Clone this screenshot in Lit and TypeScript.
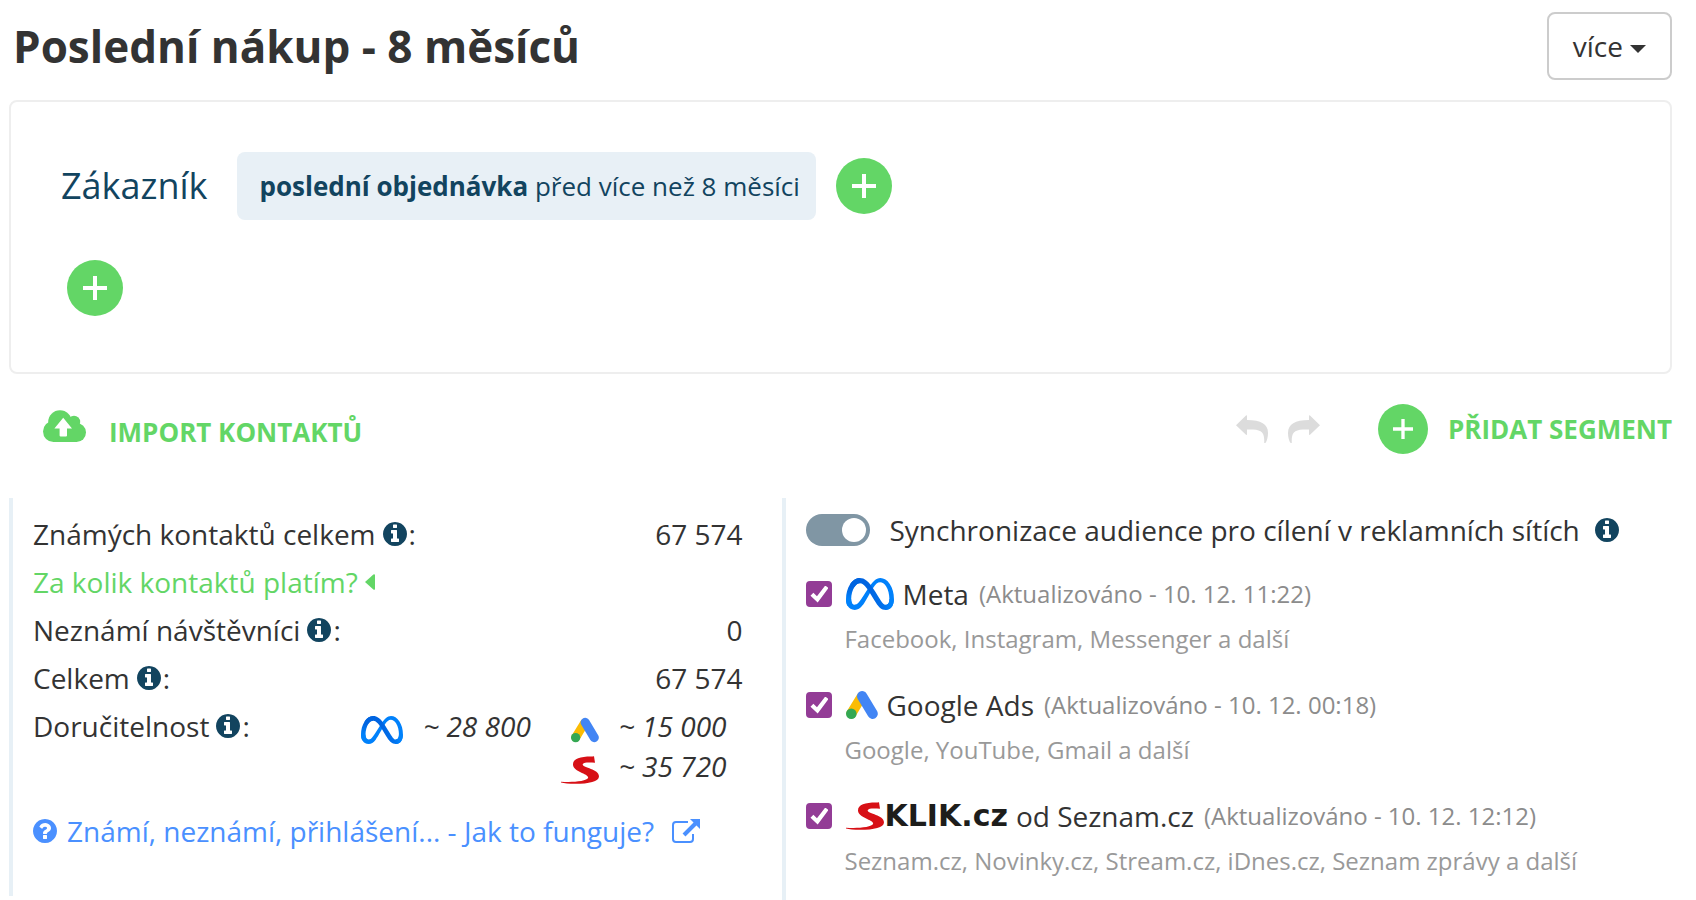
import { LitElement, html, css, svg } from "lit";
import { customElement, property, state } from "lit/decorators.js";

const circlePath =
  "M1536 768q0 209-103 385.5t-279.5 279.5-385.5 103-385.5-103-279.5-279.5-103-385.5 103-385.5 279.5-279.5 385.5-103 385.5 103 279.5 279.5 103 385.5z";

const infoIcon = html`<svg class="round-icon" viewBox="0 0 1536 1536" role="img" aria-label="Info">
  <path fill="currentColor" fill-rule="evenodd" d="M1024 1248v-160q0-14-9-23t-23-9h-96v-512q0-14-9-23t-23-9h-320q-14 0-23 9t-9 23v160q0 14 9 23t23 9h96v320h-96q-14 0-23 9t-9 23v160q0 14 9 23t23 9h448q14 0 23-9t9-23zm-128-896v-160q0-14-9-23t-23-9h-192q-14 0-23 9t-9 23v160q0 14 9 23t23 9h192q14 0 23-9t9-23z${circlePath}" />
</svg>`;

const questionIcon = html`<svg class="round-icon" viewBox="0 0 1536 1536" aria-hidden="true">
  <path fill="currentColor" fill-rule="evenodd" d="M896 1248v-192q0-14-9-23t-23-9h-192q-14 0-23 9t-9 23v192q0 14 9 23t23 9h192q14 0 23-9t9-23zm256-672q0-88-55.5-163t-138.5-116-170-41q-243 0-371 213-15 24 8 42l132 100q7 6 19 6 16 0 25-12 53-68 86-92 34-24 86-24 48 0 85.5 26t37.5 59q0 38-20 61t-68 45q-63 28-115.5 86.5t-52.5 125.5v36q0 14 9 23t23 9h192q14 0 23-9t9-23q0-19 21.5-49.5t54.5-49.5q32-18 49-28.5t46-35 44.5-48 28-60.5 12.5-81z${circlePath}" />
</svg>`;

const externalIcon = html`<svg width="28" height="24" viewBox="0 0 28 24" aria-hidden="true" fill="none" stroke="currentColor">
  <path stroke-width="2" d="M16 3H4Q1 3 1 6V20Q1 23 4 23H18Q21 23 21 20V15" />
  <path stroke-width="4" d="M12 16L24 4" />
  <path fill="currentColor" stroke="none" d="M18 0H28V10Z" />
</svg>`;

const cloudIcon = html`<svg width="43" height="32" viewBox="0 0 43 32" aria-hidden="true">
  <g fill="currentColor">
    <circle cx="17" cy="12" r="11.8" />
    <circle cx="31" cy="12" r="6.2" />
    <circle cx="10.5" cy="21.5" r="10.5" />
    <circle cx="33.5" cy="22.5" r="9.5" />
    <rect x="10" y="12" width="24" height="20" />
  </g>
  <path fill="#fff" d="M20.2 7.8L29 18.5H24V25.5Q24 26.5 23 26.5H17.6Q16.6 26.5 16.6 25.5V18.5H11.4Z" />
</svg>`;

const arrowPath = svg`<path fill="currentColor" d="M0 10.2L10 .4Q11 -.3 11 1V5C25 5 32 9 32 18C32 22 31 26 29.4 28H28.2C28.6 19 27 14.8 17 14.4H11V19Q11 20.6 10 19.8Z" />`;

const undoIcon = html`<svg width="32" height="28" viewBox="0 0 32 28" aria-hidden="true">${arrowPath}</svg>`;
const redoIcon = html`<svg width="32" height="28" viewBox="0 0 32 28" aria-hidden="true">
  <g transform="translate(32 0) scale(-1 1)">${arrowPath}</g>
</svg>`;

const plusIcon = (size: number) => html`<svg width=${size} height=${size} viewBox="0 0 24 24" aria-hidden="true">
  <path stroke="#fff" stroke-width="4" d="M12 0V24M0 12H24" />
</svg>`;

const metaLogo = (width: number, height: number) => html`<svg class="logo" width=${width} height=${height} viewBox="0 0 288 191" role="img" aria-label="Meta">
  <defs>
    <linearGradient id="meta-a" gradientUnits="userSpaceOnUse" x1="62" y1="101" x2="260" y2="91">
      <stop offset="0" stop-color="#0064e1" /><stop offset=".4" stop-color="#0064e1" />
      <stop offset=".83" stop-color="#0073ee" /><stop offset="1" stop-color="#0082fb" />
    </linearGradient>
    <linearGradient id="meta-b" gradientUnits="userSpaceOnUse" x1="41" y1="53" x2="41" y2="126">
      <stop offset="0" stop-color="#0064e0" /><stop offset="1" stop-color="#0082fb" />
    </linearGradient>
  </defs>
  <path fill="#0081fb" d="M31.06,126c0,11,2.41,19.41,5.56,24.51A19,19,0,0,0,53.19,160c8.1,0,15.51-2,29.79-21.76,11.44-15.83,24.92-38,34-52l15.36-23.6c10.67-16.39,23-34.61,37.18-47C181.07,5.6,193.54,0,206.09,0c21.07,0,41.14,12.21,56.5,35.11,16.81,25.08,25,56.67,25,89.27,0,19.38-3.82,33.62-10.32,44.87C271,180.13,258.72,191,238.13,191V160c17.63,0,22-16.2,22-34.74,0-26.42-6.16-55.74-19.73-76.69-9.63-14.86-22.11-23.94-35.84-23.94-14.85,0-26.8,11.2-40.23,31.17-7.14,10.61-14.47,23.54-22.7,38.13l-9.06,16c-18.2,32.27-22.81,39.62-31.91,51.75C84.74,183,71.12,191,53.19,191c-21.27,0-34.72-9.21-43-23.09C3.34,156.6,0,141.76,0,124.85Z" />
  <path fill="url(#meta-a)" d="M24.49,37.3C38.73,15.35,59.28,0,82.85,0c13.65,0,27.22,4,41.39,15.61,15.5,12.65,32,33.48,52.63,67.81l7.39,12.32c17.84,29.72,28,45,33.93,52.22,7.64,9.26,13,12,19.94,12,17.63,0,22-16.2,22-34.74l27.4-.86c0,19.38-3.82,33.62-10.32,44.87C271,180.13,258.72,191,238.13,191c-12.8,0-24.14-2.78-36.68-14.61-9.64-9.08-20.91-25.21-29.58-39.71L146.08,93.6c-12.94-21.62-24.81-37.74-31.68-45C107,40.71,97.51,31.23,82.35,31.23c-12.27,0-22.69,8.61-31.41,21.78Z" />
  <path fill="url(#meta-b)" d="M82.35,31.23c-12.27,0-22.69,8.61-31.41,21.78C38.61,71.62,31.06,99.34,31.06,126c0,11,2.41,19.41,5.56,24.51L10.14,167.91C3.34,156.6,0,141.76,0,124.85,0,94.1,8.44,62.05,24.49,37.3,38.73,15.35,59.28,0,82.85,0Z" />
</svg>`;

const adsLogo = (width: number, height: number) => html`<svg class="logo" width=${width} height=${height} viewBox="0 0 32 28" role="img" aria-label="Google Ads" stroke-linecap="round">
  <path stroke="#fbbc04" stroke-width="10" d="M15.4 6L5.4 22.4" />
  <path stroke="#4285f4" stroke-width="10.4" d="M16.2 5.3L26.6 22.7" />
  <circle fill="#34a853" cx="5.3" cy="22.7" r="5.3" />
</svg>`;

const seznamLogo = html`<svg class="logo" width="38" height="28" viewBox="0 0 38 28" role="img" aria-label="Seznam">
  <path fill="#d71016" d="M33 .2L34 6.8C29 6.600 22.400 6 21.600 8.400C22 11.600 38 13 38 20.200C38 25.600 28 27.800 14 27.800C8 27.800 3 27.200 0 26.500V25.700C9 26.400 26 26 27.200 21.600C27.600 17.600 12 15.600 12 8.400C12 2.400 20 .4 31.400 .6Z" />
</svg>`;

type Network = { id: string; logo: unknown; name: string; wordmark?: string; updated: string; reach: string };

const networks: Network[] = [
  { id: "meta", logo: metaLogo(48, 32), name: "Meta", updated: "(Aktualizováno - 10. 12. 11:22)", reach: "Facebook, Instagram, Messenger a další" },
  { id: "google", logo: adsLogo(32, 28), name: "Google Ads", updated: "(Aktualizováno - 10. 12. 00:18)", reach: "Google, YouTube, Gmail a další" },
  { id: "sklik", logo: seznamLogo, wordmark: "KLIK.cz", name: "od Seznam.cz", updated: "(Aktualizováno - 10. 12. 12:12)", reach: "Seznam.cz, Novinky.cz, Stream.cz, iDnes.cz, Seznam zprávy a další" },
];

const shared = css`
  * { box-sizing: border-box; }
  svg { display: block; flex: none; }
  .round-icon { width: 24px; height: 24px; }
  .info { color: #12445f; }
  button { font: inherit; color: inherit; background: none; border: 0; padding: 0; cursor: pointer; }
  a { text-decoration: none; }
`;

@customElement("segment-builder")
class SegmentBuilder extends LitElement {
  static styles = [
    shared,
    css`
      :host { display: block; }
      .panel {
        display: flex;
        flex-direction: column;
        align-items: flex-start;
        gap: 40px;
        padding: 50px 50px 56px;
        border: 2px solid #eee;
        border-radius: 8px;
      }
      .rule { display: flex; align-items: center; color: #12445f; }
      .subject { margin-right: 30px; font-size: 36px; line-height: 48px; }
      .chip {
        margin-right: 20px;
        padding: 16px 16px 16px 22px;
        border-radius: 8px;
        background: #e8f0f6;
        font-size: 26px;
        line-height: 36px;
      }
      .add {
        display: grid;
        place-items: center;
        width: 56px;
        height: 56px;
        border-radius: 50%;
        background: #63d666;
      }
      .add-group { margin-left: 6px; }
    `,
  ];

  render() {
    return html`
      <section class="panel">
        <div class="rule">
          <span class="subject">Zákazník</span>
          <button class="chip"><b>poslední objednávka</b> před více než 8 měsíci</button>
          <button class="add" aria-label="Přidat podmínku">${plusIcon(24)}</button>
        </div>
        <button class="add add-group" aria-label="Přidat skupinu">${plusIcon(24)}</button>
      </section>
    `;
  }
}

@customElement("contact-summary")
class ContactSummary extends LitElement {
  static styles = [
    shared,
    css`
      :host { display: block; padding: 12px 40px 41px 20px; border-left: 4px solid #e7f0f6; }
      .rows { margin: 0; }
      .row { display: flex; align-items: flex-start; justify-content: space-between; line-height: 48px; }
      .term { display: flex; align-items: center; }
      .term .info { margin: 0 2px 0 7px; }
      .value { margin: 0; }
      .price { display: inline-flex; align-items: center; gap: 7px; color: #63d666; }
      .reach {
        display: grid;
        grid-template-columns: 42px auto 38px auto;
        column-gap: 20px;
        justify-items: end;
        align-items: center;
        margin: 0;
        padding: 4px 16px 0 0;
        font-style: italic;
        line-height: 40px;
      }
      .logo { margin-top: 8px; }
      .first { margin-right: 10px; }
      .second-row { grid-column: 3; }
      .help { display: flex; align-items: center; margin-top: 21px; color: #4a90ff; line-height: 48px; }
      .help span { margin: 0 18px 0 10px; }
    `,
  ];

  private row(label: string, value: string) {
    return html`<div class="row">
      <dt class="term">${label}<span class="info">${infoIcon}</span>:</dt>
      <dd class="value">${value}</dd>
    </div>`;
  }

  render() {
    return html`
      <dl class="rows">
        ${this.row("Známých kontaktů celkem", "67 574")}
        <div class="row">
          <dt><a class="price" href="#">Za kolik kontaktů platím?
            <svg width="10" height="16" viewBox="0 0 10 16" aria-hidden="true"><path fill="currentColor" d="M10 1V15Q9.6 16.4 8.4 15.5L0 8L8.4 .5Q9.6 -.4 10 1Z" /></svg></a></dt>
        </div>
        ${this.row("Neznámí návštěvníci", "0")}
        ${this.row("Celkem", "67 574")}
        <div class="row">
          <dt class="term">Doručitelnost<span class="info">${infoIcon}</span>:</dt>
          <dd class="reach">
            ${metaLogo(42, 28)}<span class="first">~ 28 800</span>
            ${adsLogo(28, 26)}<span>~ 15 000</span>
            <div class="second-row">${seznamLogo}</div><span>~ 35 720</span>
          </dd>
        </div>
      </dl>
      <a class="help" href="#">${questionIcon}<span>Známí, neznámí, přihlášení... - Jak to funguje?</span>${externalIcon}</a>
    `;
  }
}

@customElement("ad-sync")
class AdSync extends LitElement {
  static styles = [
    shared,
    css`
      :host { display: block; padding: 8px 0 22px 20px; border-left: 4px solid #e7f0f6; }
      input { appearance: none; display: grid; flex: none; margin: 0; cursor: pointer; }
      .sync { display: flex; align-items: center; margin-bottom: 20px; line-height: 48px; }
      .sync label { margin: 0 15px 0 19px; }
      .switch {
        align-items: center;
        justify-items: start;
        width: 64px;
        height: 32px;
        padding: 0 4px;
        border-radius: 16px;
        background: #8096a4;
      }
      .switch::before { content: ""; width: 24px; height: 24px; border-radius: 50%; background: #fff; }
      .switch:checked { justify-items: end; }
      .networks { display: grid; gap: 29px; margin: 0; padding: 0; list-style: none; }
      .head { display: flex; align-items: center; line-height: 40px; }
      .tick {
        place-items: center;
        width: 26px;
        height: 26px;
        margin-right: 14px;
        border: 2px solid #933c96;
        border-radius: 4px;
      }
      .tick:checked { background: #933c96; }
      .tick:checked::before {
        content: "";
        width: 18px;
        height: 17px;
        background: #fff;
        clip-path: polygon(0 60%, 16% 42%, 36% 63%, 82% 0, 100% 14%, 40% 100%);
      }
      .name { display: flex; align-items: center; }
      .name .logo { margin-right: 8px; }
      .name .logo:has(+ .wordmark) { margin-right: 0; }
      .wordmark { margin-right: 8px; color: #1d1d1b; font: bold 30px/40px "DejaVu Sans", sans-serif; }
      .updated { margin-left: 10px; color: #8c8c8c; font-size: 24px; }
      .reach { margin: 8px 0 0 38px; color: #999; font-size: 24px; line-height: 34px; }
    `,
  ];

  @property({ attribute: false }) items: Network[] = networks;
  @state() private enabled = true;

  render() {
    return html`
      <div class="sync">
        <input class="switch" id="sync" type="checkbox" role="switch" .checked=${this.enabled}
          @change=${(e: Event) => (this.enabled = (e.target as HTMLInputElement).checked)} />
        <label for="sync">Synchronizace audience pro cílení v reklamních sítích</label>
        <span class="info">${infoIcon}</span>
      </div>
      <ul class="networks">
        ${this.items.map(
          (n) => html`<li>
            <div class="head">
              <input class="tick" id=${n.id} type="checkbox" checked />
              <label class="name" for=${n.id}>${n.logo}${n.wordmark ? html`<span class="wordmark">${n.wordmark}</span>` : ""}<span>${n.name}</span></label>
              <span class="updated">${n.updated}</span>
            </div>
            <p class="reach">${n.reach}</p>
          </li>`
        )}
      </ul>
    `;
  }
}

@customElement("app-root")
class AppRoot extends LitElement {
  static styles = [
    shared,
    css`
      :host {
        display: block;
        padding: 12px 24px 0 9px;
        background: #fff;
        color: #333;
        font: 28px/40px "Open Sans", "Noto Sans", sans-serif;
      }
      .header { display: flex; align-items: center; justify-content: space-between; margin-bottom: 20px; }
      h1 { margin: 0 0 0 4px; font-size: 44px; line-height: 60px; font-weight: 700; }
      .more {
        display: flex;
        align-items: center;
        gap: 7px;
        padding: 12px 24px;
        border: 2px solid #ccc;
        border-radius: 8px;
      }
      .more svg { margin-top: 6px; }
      .toolbar { display: flex; justify-content: space-between; padding: 30px 0 44px; }
      .action {
        display: flex;
        align-items: center;
        color: #63d666;
        font-size: 26px;
        font-weight: 700;
        text-transform: uppercase;
      }
      .import { gap: 23px; padding: 6px 0 0 34px; }
      .import svg { margin-bottom: 12px; }
      .tools { display: flex; align-items: center; gap: 20px; color: #dcdcdc; }
      .segment { gap: 20px; margin-left: 38px; }
      .disc {
        display: grid;
        place-items: center;
        width: 50px;
        height: 50px;
        border-radius: 50%;
        background: #63d666;
      }
      .columns { display: grid; grid-template-columns: minmax(0, 20fr) minmax(0, 23fr); align-items: start; }
    `,
  ];

  render() {
    return html`
      <header class="header">
        <h1>Poslední nákup - 8 měsíců</h1>
        <button class="more" aria-haspopup="menu">více
          <svg width="16" height="8" viewBox="0 0 16 8" aria-hidden="true"><path fill="currentColor" d="M0 0H16L8 8Z" /></svg>
        </button>
      </header>
      <segment-builder></segment-builder>
      <div class="toolbar">
        <button class="action import">${cloudIcon}<span>Import kontaktů</span></button>
        <div class="tools">
          <button aria-label="Zpět">${undoIcon}</button>
          <button aria-label="Znovu">${redoIcon}</button>
          <button class="action segment"><span class="disc">${plusIcon(20)}</span><span>Přidat segment</span></button>
        </div>
      </div>
      <main class="columns">
        <contact-summary></contact-summary>
        <ad-sync></ad-sync>
      </main>
    `;
  }
}
